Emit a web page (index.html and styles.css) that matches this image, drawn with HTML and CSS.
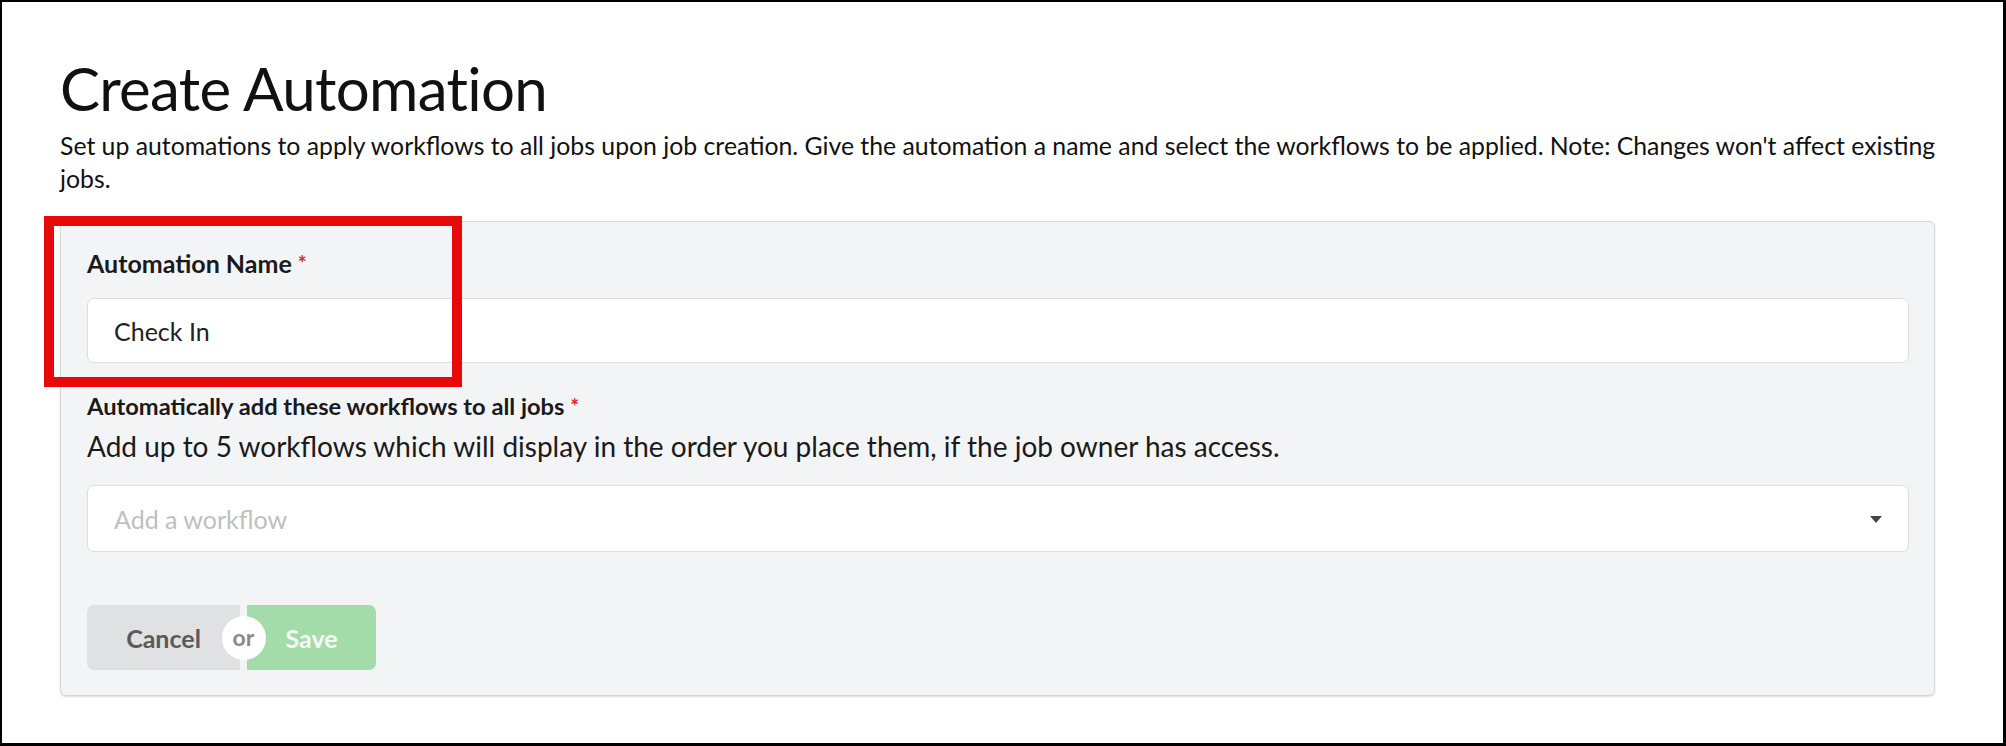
FILE: index.html
```html
<!DOCTYPE html>
<html lang="en">
<head>
<meta charset="utf-8">
<title>Create Automation</title>
<link rel="stylesheet" href="styles.css">
</head>
<body>
<div class="frame">
  <h1 class="title">Create Automation</h1>
  <p class="intro">Set up automations to apply workflows to all jobs upon job creation. Give the automation a name and select the workflows to be applied. Note: Changes won't affect existing jobs.</p>
  <form class="card">
    <div class="field">
      <label class="label label-name">Automation Name <span class="req">*</span></label>
      <div class="input"><span class="value">Check In</span></div>
    </div>
    <div class="field field-workflows">
      <label class="label label-workflows">Automatically add these workflows to all jobs <span class="req">*</span></label>
      <p class="help">Add up to 5 workflows which will display in the order you place them, if the job owner has access.</p>
      <div class="select">
        <span class="placeholder">Add a workflow</span>
        <span class="caret"></span>
      </div>
    </div>
    <div class="buttons">
      <button type="button" class="btn btn-cancel">Cancel</button>
      <div class="or"><span class="or-badge">or</span></div>
      <button type="button" class="btn btn-save">Save</button>
    </div>
  </form>
  <div class="highlight"></div>
</div>
</body>
</html>
```

FILE: styles.css
```css
html, body {
  margin: 0;
  padding: 0;
  background: #ffffff;
}

body {
  font-family: Lato, "Open Sans", "Liberation Sans", sans-serif;
  color: #1b1c1d;
}

.frame {
  position: relative;
  box-sizing: border-box;
  width: 2006px;
  height: 746px;
  border-style: solid;
  border-color: #000;
  border-width: 2px 3px 3px 2px;
  padding: 0 40px 0 58px;
  background: #fff;
}

.title {
  margin: 0;
  padding-top: 50px;
  font-size: 60px;
  letter-spacing: -0.7px;
  font-weight: 400;
  line-height: 72px;
  color: #111;
}

.intro {
  margin: 5px 0 0;
  font-size: 24.8px;
  line-height: 33px;
  color: #111;
}

.card {
  box-sizing: border-box;
  margin-top: 26px;
  width: 1875px;
  background: #f3f4f5;
  border: 1px solid #d6d7d8;
  border-radius: 6px;
  box-shadow: 0 1px 2px rgba(34, 36, 38, 0.15);
  padding: 26px 25px 25px 26px;
}

.field {
  display: flex;
  flex-direction: column;
}

.label {
  line-height: 30px;
  font-weight: 700;
  color: #1a1a1a;
}

.label-name {
  font-size: 25px;
}

.label-workflows {
  font-size: 23.7px;
}

.req {
  color: #db2828;
  font-size: 21px;
  vertical-align: top;
}

.input,
.select {
  box-sizing: border-box;
  display: flex;
  align-items: center;
  background: #fff;
  border: 1px solid #dcdcdd;
  border-radius: 7px;
  padding: 0 26px;
}

.input {
  margin-top: 20px;
  height: 65px;
}

.value {
  font-size: 25px;
  color: #222;
}

.field-workflows {
  margin-top: 28px;
}

.help {
  margin: 8px 0 0;
  font-size: 28px;
  line-height: 34px;
  color: #1a1a1a;
}

.select {
  margin-top: 22px;
  height: 67px;
  justify-content: space-between;
  padding-right: 26px;
}

.placeholder {
  font-size: 25px;
  color: #bfbfbf;
}

.caret {
  width: 0;
  height: 0;
  border-left: 6px solid transparent;
  border-right: 6px solid transparent;
  border-top: 7px solid #444;
  margin-top: 2px;
}

.buttons {
  display: flex;
  align-items: center;
  margin-top: 53px;
}

.btn {
  box-sizing: border-box;
  height: 65px;
  border: 0;
  font-family: inherit;
  font-size: 25px;
  font-weight: 700;
  padding: 0 38px;
  cursor: pointer;
}

.btn-cancel {
  background: #e0e1e2;
  color: #5a5a5a;
  border-radius: 7px 0 0 7px;
  width: 153px;
}

.btn-save {
  background: #a3dba9;
  color: #f6fbf7;
  border-radius: 0 7px 7px 0;
  width: 129px;
}

.or {
  position: relative;
  width: 7px;
  height: 65px;
  z-index: 2;
}

.or-badge {
  position: absolute;
  left: 50%;
  top: 50%;
  width: 44px;
  height: 44px;
  margin: -22px 0 0 -22px;
  border-radius: 50%;
  background: #fff;
  color: #8a8a8a;
  font-size: 23px;
  font-weight: 700;
  line-height: 42px;
  text-align: center;
}

.highlight {
  position: absolute;
  left: 42px;
  top: 214px;
  width: 418px;
  height: 171px;
  box-sizing: border-box;
  border: 10px solid #e8090b;
  pointer-events: none;
}
```
